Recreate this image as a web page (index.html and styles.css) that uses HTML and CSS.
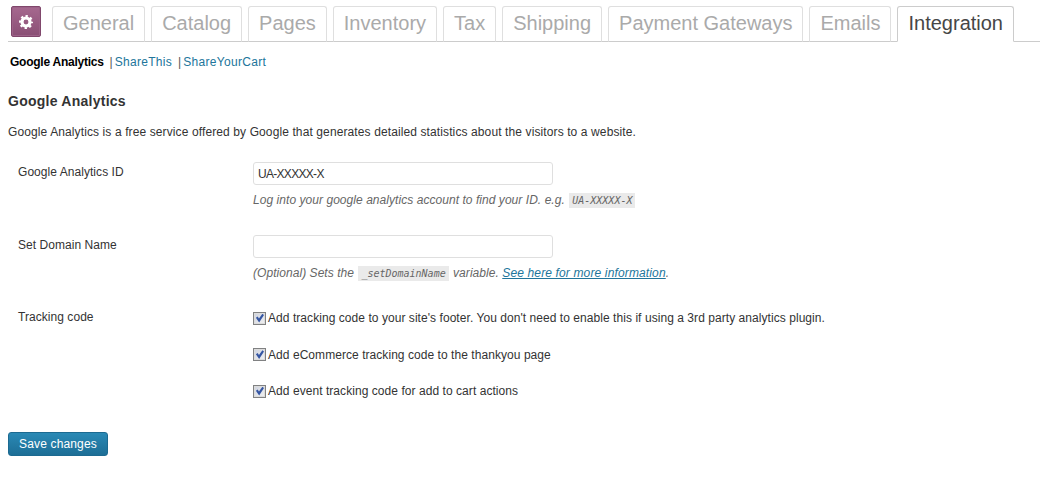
FILE: index.html
```html
<!DOCTYPE html>
<html lang="en">
<head>
<meta charset="utf-8">
<title>Integration</title>
<link rel="stylesheet" href="styles.css">
</head>
<body>
<div class="wrap">
  <nav class="tabs">
    <span class="logo"><svg width="14" height="14" viewBox="0 0 16 16" fill="none" stroke="#fff"><circle cx="8" cy="8" r="4.6" stroke-width="3.6"/><circle cx="8" cy="8" r="6.8" stroke-width="2.4" stroke-dasharray="2.67 2.67" stroke-dashoffset="1.33"/></svg></span>
    <a class="tab">General</a>
    <a class="tab">Catalog</a>
    <a class="tab">Pages</a>
    <a class="tab">Inventory</a>
    <a class="tab">Tax</a>
    <a class="tab">Shipping</a>
    <a class="tab">Payment Gateways</a>
    <a class="tab">Emails</a>
    <a class="tab active">Integration</a>
  </nav>
  <ul class="subnav">
    <li class="current">Google Analytics</li>
    <li class="sep">|<a href="#">ShareThis</a></li>
    <li class="sep">|<a href="#">ShareYourCart</a></li>
  </ul>
  <h3 class="title">Google Analytics</h3>
  <p class="intro">Google Analytics is a free service offered by Google that generates detailed statistics about the visitors to a website.</p>
  <div class="row row-id">
    <div class="label">Google Analytics ID</div>
    <div class="field">
      <input class="text" type="text" value="UA-XXXXX-X">
      <p class="desc">Log into your google analytics account to find your ID. e.g. <code>UA-XXXXX-X</code></p>
    </div>
  </div>
  <div class="row row-domain">
    <div class="label">Set Domain Name</div>
    <div class="field">
      <input class="text" type="text">
      <p class="desc">(Optional) Sets the <code>_setDomainName</code> variable. <a href="#">See here for more information</a>.</p>
    </div>
  </div>
  <div class="row row-track">
    <div class="label">Tracking code</div>
    <div class="field checks">
      <label class="check"><input type="checkbox" checked>Add tracking code to your site's footer. You don't need to enable this if using a 3rd party analytics plugin.</label>
      <label class="check"><input type="checkbox" checked>Add eCommerce tracking code to the thankyou page</label>
      <label class="check"><input type="checkbox" checked>Add event tracking code for add to cart actions</label>
    </div>
  </div>
  <button class="save" type="button">Save changes</button>
</div>
</body>
</html>
```
FILE: styles.css
```css
* { box-sizing: border-box; }
html, body { margin: 0; padding: 0; background: #fff; }
body { font-family: "Liberation Sans", Arial, sans-serif; font-size: 12px; color: #333; height: 493px; overflow: hidden; }
.wrap { padding: 0 0 0 8px; }
.tabs { display: flex; align-items: flex-end; height: 42px; padding-left: 3px; border-bottom: 1px solid #ccc; }
.logo { width: 30px; height: 31px; margin: 0 11px 4px 0; display: flex; align-items: center; justify-content: center; background: linear-gradient(#a6688f, #8a4f75); border: 1px solid #80476c; border-radius: 2px; box-shadow: inset 0 0 0 1px #9c6187; }
.tab { height: 36px; margin-right: 6px; margin-bottom: -1px; padding: 0 10px; font-size: 20px; line-height: 32px; color: #aaa; border: 1px solid #dfdfdf; border-bottom-color: #ccc; border-radius: 3px 3px 0 0; }
.tab.active { color: #464646; background: #fff; border-color: #ccc; border-bottom-color: #fff; }
.subnav { display: flex; list-style: none; margin: 13px 0 0 2px; padding: 0; height: 14px; line-height: 14px; }
.subnav .current { font-weight: bold; color: #000; margin-right: 6px; letter-spacing: -.25px; }
.subnav .sep { color: #555; margin-right: 6px; }
.subnav .sep a { margin-left: 2px; letter-spacing: .3px; }
a { color: #21759b; }
.subnav a { text-decoration: none; }
.title { margin: 24px 0 0; font-size: 14px; line-height: 16px; font-weight: bold; letter-spacing: .25px; color: #333; }
.intro { margin: 15px 0 0; line-height: 16px; letter-spacing: .11px; }
.row { display: flex; }
.label { width: 245px; padding: 2px 0 0 10px; line-height: 16px; letter-spacing: .05px; }
.row-id { margin-top: 22px; height: 73px; }
.row-domain { height: 72px; }
.text { display: block; width: 300px; height: 23px; padding: 0 4px; font: 12px "Liberation Sans", Arial, sans-serif; letter-spacing: -.7px; color: #333; border: 1px solid #dfdfdf; border-radius: 3px; background: #fff; outline: 0; }
.desc { margin: 6px 0 0; font-style: italic; color: #666; line-height: 18px; white-space: nowrap; letter-spacing: .05px; }
.desc a { letter-spacing: .14px; }
code { font-family: "DejaVu Sans Mono", monospace; font-size: 10px; font-style: italic; letter-spacing: 0; background: #eaeaea; padding: 2px 3px; margin: 0 1px; }
.checks { display: flex; flex-direction: column; gap: 20.5px; padding-top: 3px; }
.check { display: flex; align-items: center; height: 16px; line-height: 16px; letter-spacing: .055px; }
.check input { appearance: none; position: relative; flex: none; width: 13px; height: 13px; margin: 0 2px 0 0; border: 1px solid #808182; background: linear-gradient(135deg, #cdd2de, #f2f2f2); box-shadow: inset 0 0 0 1px #dcdcdc; }
.check input:checked::after { content: ""; position: absolute; inset: 1px; background: #3556a3; clip-path: polygon(10% 48%, 30% 34%, 44% 56%, 82% 2%, 100% 18%, 46% 100%); }
.row-track { height: 125px; }
.save { display: block; width: 100px; height: 24px; margin: 0; padding: 0; font: 12px "Liberation Sans", Arial, sans-serif; letter-spacing: .15px; color: #fff; background: linear-gradient(#2a89b5, #1d6e96); border: 1px solid #1c6a91; border-radius: 3px; }
```
